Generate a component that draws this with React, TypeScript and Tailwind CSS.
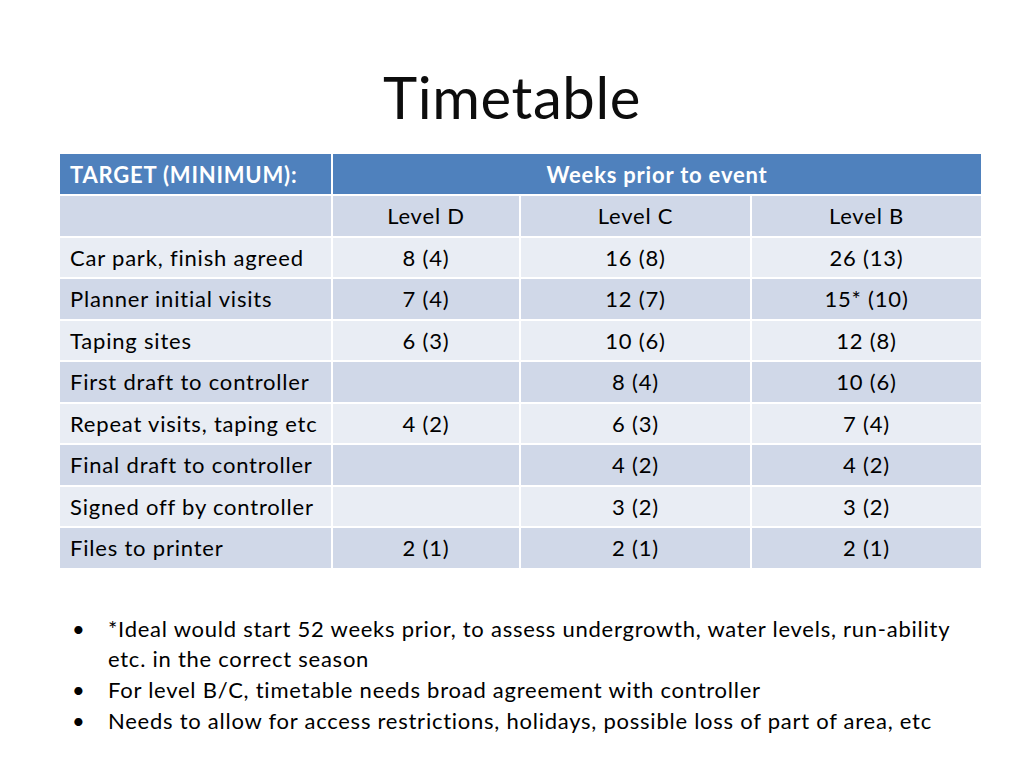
const rows: [string, string, string, string][] = [
  ["", "Level D", "Level C", "Level B"],
  ["Car park, finish agreed", "8 (4)", "16 (8)", "26 (13)"],
  ["Planner initial visits", "7 (4)", "12 (7)", "15* (10)"],
  ["Taping sites", "6 (3)", "10 (6)", "12 (8)"],
  ["First draft to controller", "", "8 (4)", "10 (6)"],
  ["Repeat visits, taping etc", "4 (2)", "6 (3)", "7 (4)"],
  ["Final draft to controller", "", "4 (2)", "4 (2)"],
  ["Signed off by controller", "", "3 (2)", "3 (2)"],
  ["Files to printer", "2 (1)", "2 (1)", "2 (1)"],
];

const bullets = [
  "*Ideal would start 52 weeks prior, to assess undergrowth, water levels, run-ability etc. in the correct season",
  "For level B/C, timetable needs broad agreement with controller",
  "Needs to allow for access restrictions, holidays, possible loss of part of area, etc",
];

export default function App() {
  return (
    <div className="h-[768px] w-[1024px] bg-white font-['Lato',sans-serif] text-black">
      <h1 className="pt-[61px] text-center text-[58px] leading-[72px] tracking-[0.6px] text-[#0d0d0d]">Timetable</h1>

      <div className="ml-[60px] mt-[21px] grid w-[921px] grid-cols-[271px_186px_229px_229px] gap-[2px] bg-white text-[22px] tracking-[0.8px]">
        <div className="flex h-[40px] items-center bg-[#4f81bd] pl-[10px] font-bold text-white">TARGET (MINIMUM):</div>
        <div className="col-span-3 flex h-[40px] items-center justify-center bg-[#4f81bd] font-bold text-white">
          Weeks prior to event
        </div>
        {rows.map((row, i) => {
          const bg = i % 2 === 0 ? "bg-[#d0d8e8]" : "bg-[#e9edf4]";
          return row.map((cell, j) => (
            <div
              key={`${i}-${j}`}
              className={`flex h-[39.5px] items-center ${bg} ${j === 0 ? "pl-[10px]" : "justify-center"}`}
            >
              {cell}
            </div>
          ));
        })}
      </div>

      <ul className="ml-[72px] mt-[46px] w-[900px] text-[22px] leading-[30.7px] tracking-[0.75px]">
        {bullets.map((b) => (
          <li key={b} className="flex">
            <span className="w-[36px] shrink-0">•</span>
            <span className="w-[860px]">{b}</span>
          </li>
        ))}
      </ul>
    </div>
  );
}
